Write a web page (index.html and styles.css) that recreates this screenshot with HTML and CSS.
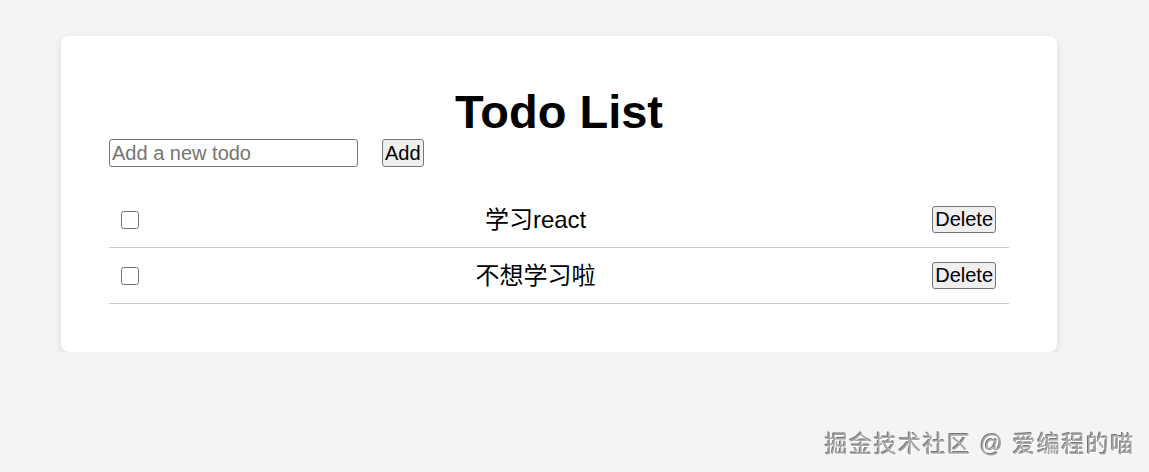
FILE: index.html
```html
<!DOCTYPE html>
<html lang="zh-CN">
<head>
  <meta charset="UTF-8">
  <meta name="viewport" content="width=device-width, initial-scale=1.0">
  <title>Todo List</title>
  <link rel="stylesheet" href="styles.css">
</head>
<body>
  <main class="todo-card">
    <h1>Todo List</h1>
    <div class="todo-form">
      <input type="text" class="todo-input" placeholder="Add a new todo">
      <button type="button" class="btn">Add</button>
    </div>
    <ul class="todo-list">
      <li class="todo-item">
        <input type="checkbox" class="todo-check">
        <span class="todo-text">学习react</span>
        <button type="button" class="btn">Delete</button>
      </li>
      <li class="todo-item">
        <input type="checkbox" class="todo-check">
        <span class="todo-text">不想学习啦</span>
        <button type="button" class="btn">Delete</button>
      </li>
    </ul>
  </main>
  <div class="watermark">掘金技术社区 @ 爱编程的喵</div>
</body>
</html>
```

FILE: styles.css
```css
body {
  margin: 0;
  padding: 36px 92px 0 61px;
  background-color: #f4f4f4;
  font-family: Arial, "Liberation Sans", "Noto Sans CJK SC", sans-serif;
  color: #000;
}
.todo-card {
  width: 900px;
  background-color: #fff;
  border-radius: 8px;
  padding: 49px 48px 48px;
  box-shadow: 0 3px 8px rgba(0, 0, 0, 0.1);
}
h1 {
  margin: 0;
  text-align: center;
  font-size: 47px;
  font-weight: bold;
  line-height: 54px;
}
.todo-form {
  display: flex;
  align-items: center;
  gap: 24px;
}
.todo-input {
  box-sizing: border-box;
  width: 249px;
  height: 28px;
  margin: 0;
  padding: 1px 2px;
  font-family: inherit;
  font-size: 20px;
  border: 1px solid #767676;
  border-radius: 3px;
}
.todo-input::placeholder {
  color: #757575;
}
.btn {
  margin: 0;
  padding: 1px 2px;
  font-family: inherit;
  font-size: 20px;
  line-height: 23px;
  color: #000;
  background-color: #efefef;
  border: 1px solid #767676;
  border-radius: 3px;
}
.todo-form .btn {
  height: 28px;
  padding: 0 2px;
}
.todo-list {
  list-style: none;
  margin: 25px 0 0;
  padding: 0;
}
.todo-item {
  display: flex;
  align-items: center;
  padding: 14px 13px 14px 12px;
  border-bottom: 1px solid #ccc;
}
.todo-check {
  width: 18px;
  height: 18px;
  margin: 0;
}
.todo-text {
  flex: 1;
  text-align: center;
  font-size: 24px;
  line-height: 27px;
}
.watermark {
  position: fixed;
  right: 14px;
  bottom: 13px;
  font-size: 23px;
  letter-spacing: 1.5px;
  color: #a8a8a8;
  text-shadow: 1px 1px 0 #fff, -1px -1px 0 #777;
}
```
